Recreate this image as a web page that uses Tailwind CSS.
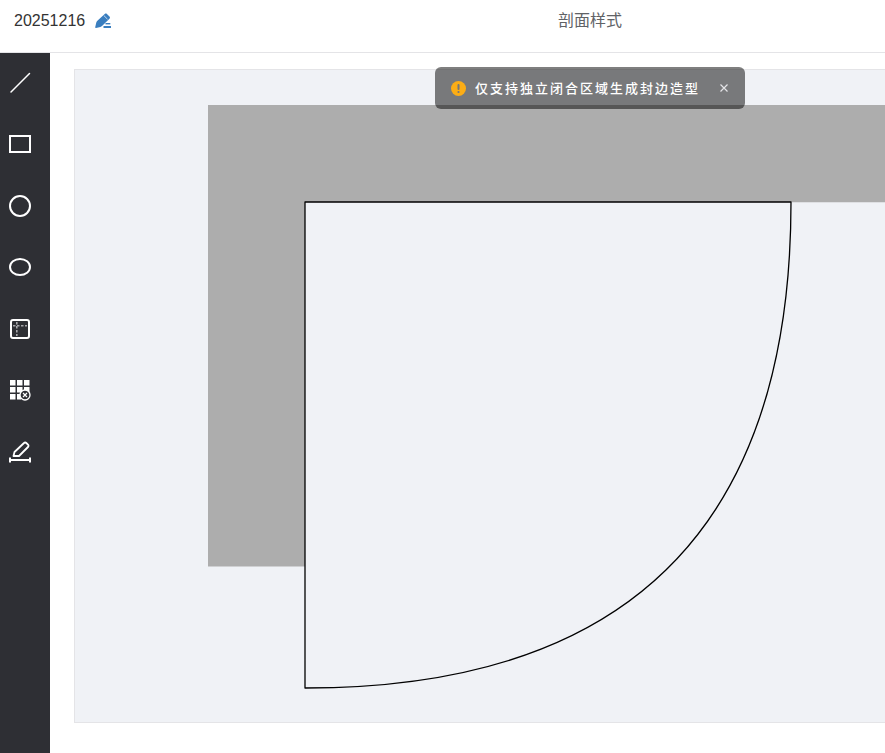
<!DOCTYPE html>
<html lang="en">

<head>
	<meta charset="UTF-8">
	<meta name="viewport" content="width=device-width, initial-scale=1.0">
	<title>剖面样式</title>
	<script src="https://cdn.jsdelivr.net/npm/@tailwindcss/browser@4"></script>
</head>

<body class="bg-white h-screen overflow-hidden flex flex-col font-['Liberation_Sans','Noto_Sans_CJK_SC',sans-serif]">
	<!-- header -->
	<header class="relative h-[53px] shrink-0 border-b border-[#e4e4e7] flex items-start">
		<div class="flex items-center pl-[14px] pt-[10px] text-base leading-[22px] text-[#333]">
			<span>20251216</span>
			<svg class="w-4 h-4 ml-[10px]" viewBox="0 0 16 16" fill="#3a7ebf">
				<path d="M10 .8c.5-.5 1.200-.5 1.700 0l3 3c.4.5.4 1.200 0 1.600L7 13c-.5.5-1 .7-1.600.9L1 15c-.5.1-.9-.3-.8-.8L1.300 9.500c.2-.6.4-1.100.8-1.500z" />
				<path d="m8.800 2.500 3.700 3.700" stroke="#fff" stroke-width=".7" />
				<rect x="10.500" y="10" width="4.800" height="1.400" />
				<rect x="8.500" y="13" width="7.500" height="2" />
			</svg>
		</div>
		<div class="absolute left-[558px] top-[10px] text-base leading-[22px] text-[#606266]">剖面样式</div>
	</header>

	<div class="flex-1 flex min-h-0">
		<!-- tool bar -->
		<aside class="w-[50px] shrink-0 bg-[#2e2f34] flex flex-col text-white">
			<div class="h-[61.5px] mt-[-1px] flex items-center pl-[9px]">
				<svg class="w-[22px] h-[22px]" viewBox="0 0 22 22" fill="none" stroke="currentColor" stroke-width="1.500" stroke-linecap="round"><path d="M2 20 20.500 1.500" /></svg>
			</div>
			<div class="h-[61.5px] flex items-center pl-[9px]">
				<svg class="w-[22px] h-[18px]" viewBox="0 0 22 18" fill="none" stroke="currentColor" stroke-width="2"><rect x="1" y="1" width="20" height="16" /></svg>
			</div>
			<div class="h-[61.5px] flex items-center pl-[9px]">
				<svg class="w-[22px] h-[22px]" viewBox="0 0 22 22" fill="none" stroke="currentColor" stroke-width="2"><circle cx="11" cy="11" r="10" /></svg>
			</div>
			<div class="h-[61.5px] flex items-center pl-[9px]">
				<svg class="w-[22px] h-[18px]" viewBox="0 0 22 18" fill="none" stroke="currentColor" stroke-width="2"><ellipse cx="11" cy="9" rx="10" ry="8" /></svg>
			</div>
			<div class="h-[61.5px] flex items-center pl-[10px]">
				<svg class="w-5 h-5" viewBox="0 0 20 20" fill="none" stroke="currentColor">
					<rect x="1" y="1" width="18" height="18" rx="2" stroke-width="2" />
					<path d="M6.800 3v14M3 6.800h14" stroke="#a5a6a9" stroke-width="1.600" stroke-dasharray="2.500 1.500" />
				</svg>
			</div>
			<div class="h-[61.5px] flex items-center pl-[10px]">
				<svg class="w-[21px] h-[21px]" viewBox="0 0 21 21" fill="currentColor">
					<rect x="0" y="0" width="5.500" height="5.500" /><rect x="7" y="0" width="5.500" height="5.500" /><rect x="14" y="0" width="5.500" height="5.500" />
					<rect x="0" y="7" width="5.500" height="5.500" /><rect x="7" y="7" width="5.500" height="5.500" /><rect x="14" y="7" width="5.500" height="5.500" />
					<rect x="0" y="14" width="5.500" height="5.500" /><rect x="7" y="14" width="4" height="5.500" />
					<circle cx="15" cy="15" r="5" fill="#2e2f34" stroke="currentColor" stroke-width="1.300" />
					<path d="m13 13 4 4m0-4-4 4" stroke="currentColor" stroke-width="1.200" />
				</svg>
			</div>
			<div class="h-[61.5px] flex items-center pl-[9px]">
				<svg class="w-[22px] h-[22px]" viewBox="0 0 22 22" fill="none" stroke="currentColor" stroke-width="1.800" stroke-linejoin="round">
					<path d="M4.500 15 5.500 11 15 2c.7-.7 1.600-.7 2.300 0L19 3.700c.7.7.7 1.600 0 2.300L10 15z" />
					<path d="M1 19h20M1 16.500v5M21 16.500v5" stroke-width="2" />
				</svg>
			</div>
		</aside>

		<!-- canvas -->
		<main class="flex-1 min-w-0 pl-[24px] pt-[16px] overflow-hidden">
			<div class="relative h-[654px] border border-[#e4e4e7] border-r-0 bg-[#f0f2f6]">
				<svg class="absolute left-[-1px] top-[-1px]" width="811" height="654" viewBox="74 69 811 654">
					<path d="M208 105H885V202.300H305V566.500H208Z" fill="#adadad" />
					<path d="M305 202H791Q791 688 305 688Z" fill="#f0f2f6" stroke="#000" stroke-width="1.300" stroke-linejoin="round" />
				</svg>
			</div>
		</main>
	</div>

	<!-- message -->
	<div class="absolute left-[435px] top-[67px] w-[310px] h-[42px] rounded-[6px] bg-black/50 flex items-center pl-4 text-white">
		<svg class="w-[15px] h-[15px] shrink-0" viewBox="0 0 15 15">
			<circle cx="7.500" cy="7.500" r="7.500" fill="#fcad15" />
			<rect x="6.500" y="3" width="2" height="6" rx="1" fill="#757678" />
			<circle cx="7.500" cy="11" r="1.100" fill="#757678" />
		</svg>
		<span class="ml-[9px] text-[13px] leading-5 tracking-[2px] font-medium whitespace-nowrap font-['Noto_Sans_CJK_SC',sans-serif]">仅支持独立闭合区域生成封边造型</span>
		<span class="ml-[19px] w-[10px] h-[10px] flex">
			<svg class="w-[10px] h-[10px]" viewBox="0 0 10 10" fill="none" stroke="#e4e4e7" stroke-width="1.200"><path d="m1.500 1.500 7 7m0-7-7 7" /></svg>
		</span>
	</div>
</body>

</html>
